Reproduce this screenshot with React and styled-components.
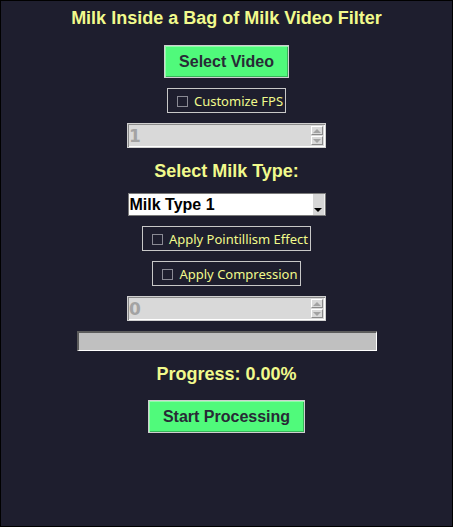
import React from "react";
import styled, { createGlobalStyle } from "styled-components";

const Global = createGlobalStyle`
  html, body { margin: 0; padding: 0; background: #1e1e2e; }
  * { box-sizing: border-box; }
`;

const Window = styled.div`
  width: 453px;
  height: 527px;
  border: 1px solid #000;
  background: #1e1e2e;
  display: flex;
  flex-direction: column;
  align-items: center;
  padding-top: 7px;
  font-family: "Liberation Sans", Arial, sans-serif;
`;

const Heading = styled.div`
  font-weight: bold;
  font-size: 18px;
  line-height: 21px;
  height: 21px;
  color: #f1fa8c;
  white-space: nowrap;
  margin-top: ${(p) => p.$mt || 0}px;
`;

const ActionButton = styled.button`
  height: 33px;
  padding: 0 14px;
  margin-top: ${(p) => p.$mt || 0}px;
  background: #50fa7b;
  color: #282a36;
  font-family: "Liberation Sans", Arial, sans-serif;
  font-weight: bold;
  font-size: 16px;
  line-height: 19px;
  border: 1px solid #cfcfcf;
  box-shadow: inset 1px 1px 0 #8dffa9, inset -1px -1px 0 #37b45a;
  white-space: nowrap;
  cursor: pointer;
`;

const CheckFrame = styled.label`
  display: flex;
  align-items: center;
  gap: 6px;
  height: 25px;
  margin-top: 10px;
  padding: 0 2px 0 9px;
  border: 1px solid #c8c8c8;
  font-family: "Noto Sans", "DejaVu Sans", sans-serif;
  font-size: 13px;
  color: #f1fa8c;
  white-space: nowrap;
`;

const CheckBox = styled.span`
  width: 11px;
  height: 11px;
  margin-top: 1px;
  border: 1px solid #8a8a94;
  flex: none;
`;

const Spin = styled.div`
  width: 199px;
  height: 25px;
  margin-top: 10px;
  display: flex;
  align-items: center;
  border: 1px solid #d0d0d0;
  background: #d9d9d9;
  box-shadow: inset 1px 1px 0 #8a8a8a, inset -1px -1px 0 #ffffff;
`;

const SpinValue = styled.div`
  flex: 1;
  padding-left: 1px;
  font-family: "DejaVu Sans", sans-serif;
  font-weight: bold;
  font-size: 17px;
  line-height: 20px;
  color: #a3a3a3;
`;

const ArrowCol = styled.div`
  display: flex;
  flex-direction: column;
  gap: 1px;
  height: 100%;
  padding: 2px 2px 2px 0;
`;

const ArrowBtn = styled.div`
  width: 12px;
  flex: 1;
  display: flex;
  align-items: center;
  justify-content: center;
  border-top: 1px solid #ffffff;
  border-left: 1px solid #ffffff;
  border-bottom: 1px solid #8a8a8a;
  border-right: 1px solid #8a8a8a;
  background: #d9d9d9;
`;

const Tri = styled.span`
  width: 0;
  height: 0;
  border-left: 4px solid transparent;
  border-right: 4px solid transparent;
  ${(p) =>
    p.$down
      ? "border-top: 4px solid #a3a3a3;"
      : "border-bottom: 4px solid #a3a3a3;"}
`;

const Select = styled.div`
  width: 198px;
  height: 23px;
  margin-top: 11px;
  display: flex;
  align-items: stretch;
  background: #ffffff;
  border: 1px solid #7a7a7a;
  font-family: "Liberation Sans", Arial, sans-serif;
  font-weight: bold;
  font-size: 16px;
  color: #000;
`;

const SelectText = styled.div`
  flex: 1;
  display: flex;
  align-items: center;
  padding-left: 1px;
  white-space: nowrap;
`;

const SelectIndicator = styled.div`
  width: 12px;
  background: #d6d6d6;
  border-right: 1px solid #f0f0f0;
  display: flex;
  align-items: flex-end;
  justify-content: center;
  padding-bottom: 3px;
`;

const DownArrow = styled.span`
  width: 0;
  height: 0;
  border-left: 4px solid transparent;
  border-right: 4px solid transparent;
  border-top: 4px solid #000;
`;

const ProgressTrack = styled.div`
  width: 300px;
  height: 20px;
  margin-top: 10px;
  background: #c0c0c0;
  border-top: 2px solid #5c5c5c;
  border-left: 2px solid #5c5c5c;
  border-bottom: 1px solid #ffffff;
  border-right: 1px solid #ffffff;
`;

const ProgressFill = styled.div`
  height: 100%;
  background: #50fa7b;
`;

function SpinBox({ value }) {
  return (
    <Spin>
      <SpinValue>{value}</SpinValue>
      <ArrowCol>
        <ArrowBtn>
          <Tri />
        </ArrowBtn>
        <ArrowBtn>
          <Tri $down />
        </ArrowBtn>
      </ArrowCol>
    </Spin>
  );
}

function Check({ label }) {
  return (
    <CheckFrame>
      <CheckBox />
      <span>{label}</span>
    </CheckFrame>
  );
}

export default function App() {
  const progress = 0;
  return (
    <>
      <Global />
      <Window>
        <Heading>Milk Inside a Bag of Milk Video Filter</Heading>
        <ActionButton $mt={16}>Select Video</ActionButton>
        <Check label="Customize FPS" />
        <SpinBox value="1" />
        <Heading $mt={13}>Select Milk Type:</Heading>
        <Select>
          <SelectText>Milk Type 1</SelectText>
          <SelectIndicator>
            <DownArrow />
          </SelectIndicator>
        </Select>
        <Check label="Apply Pointillism Effect" />
        <Check label="Apply Compression" />
        <SpinBox value="0" />
        <ProgressTrack>
          <ProgressFill style={{ width: `${progress}%` }} />
        </ProgressTrack>
        <Heading $mt={13}>Progress: {progress.toFixed(2)}%</Heading>
        <ActionButton $mt={15}>Start Processing</ActionButton>
      </Window>
    </>
  );
}
